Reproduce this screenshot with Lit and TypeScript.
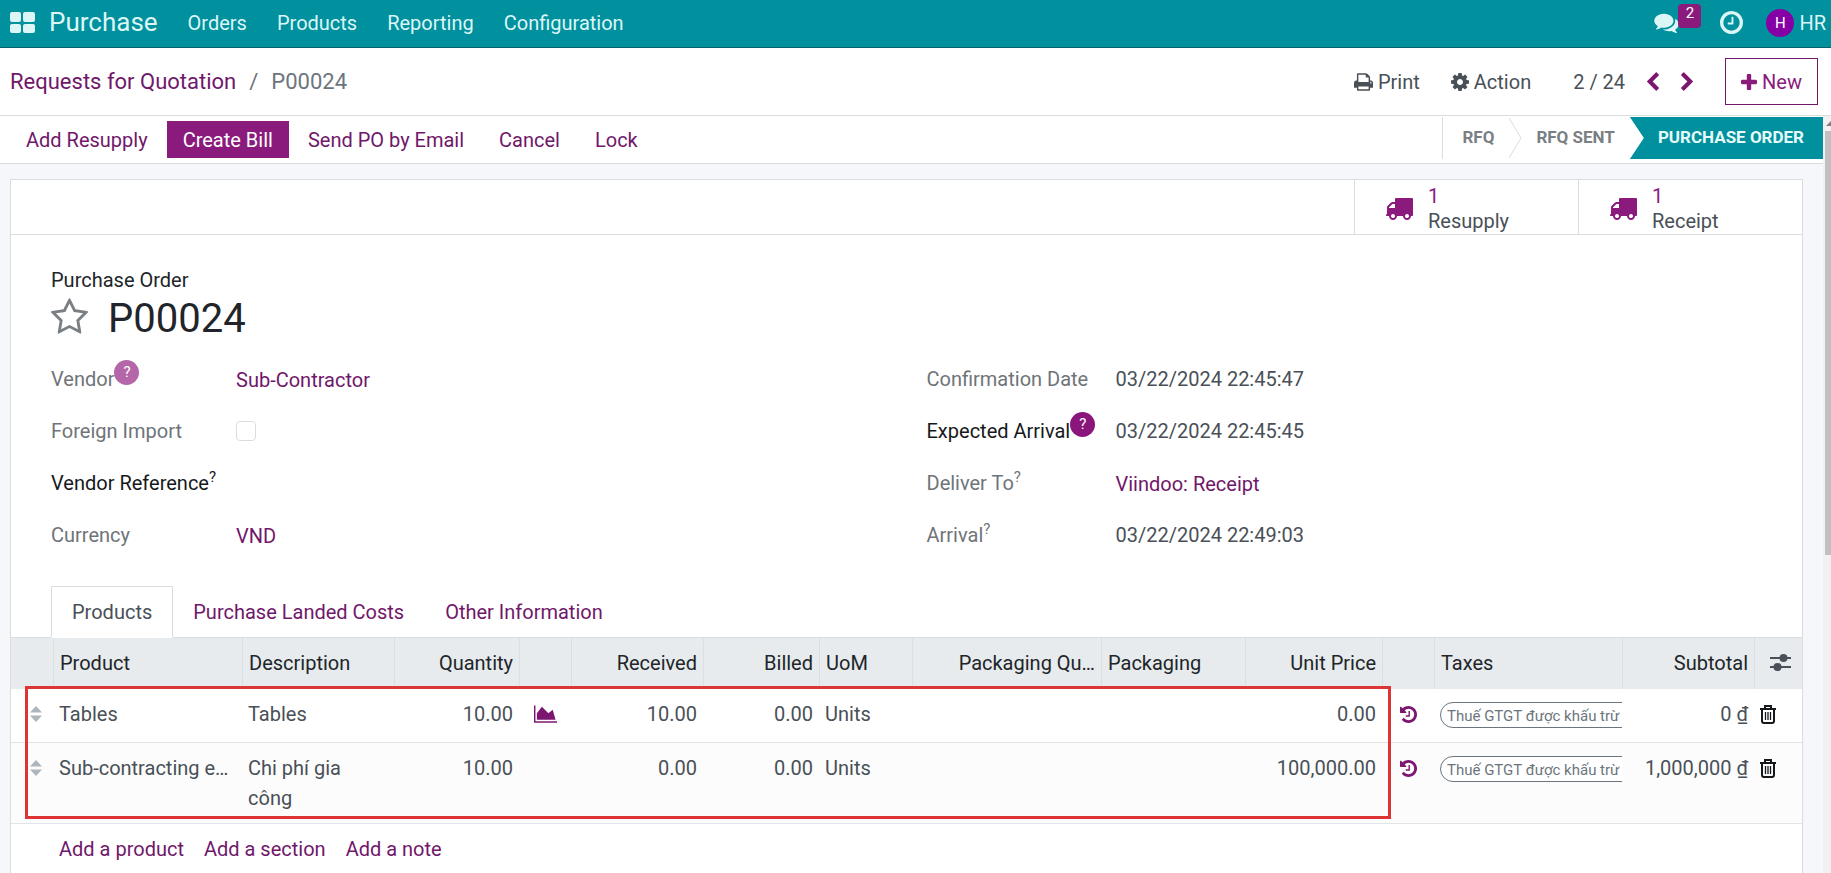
import { LitElement, html, css, svg, nothing } from "lit";
import { customElement, property } from "lit/decorators.js";
import { classMap } from "lit/directives/class-map.js";

const ICONS: Record<string, { box: string; d: string }> = {
  comments: {
    box: "0 128 1792 1536",
    d: "M1408 768q0 139-94 257t-256.5 186.5-353.5 68.5q-86 0-176-16-124 88-278 128-36 9-86 16h-3q-11 0-20.5-8t-11.5-21q-1-3-1-6.5t.5-6.5 2-6l2.5-5 3.5-5.5 4-5 4.5-5 4-4.5q5-6 23-25t26-29.5 22.5-29 25-38.5 20.5-44q-124-72-195-177t-71-224q0-139 94-257t256.5-186.5 353.5-68.5 353.5 68.5 256.5 186.5 94 257zm384 256q0 120-71 224.5t-195 176.5q10 24 20.5 44t25 38.5 22.5 29 26 29.5 23 25q1 1 4 4.5t4.5 5 4 5 3.5 5.5l2.5 5 2 6 .5 6.5-1 6.5q-3 14-13 22t-22 7q-50-7-86-16-154-40-278-128-90 16-176 16-271 0-472-132 58 4 88 4 161 0 309-45t264-129q125-92 192-212t67-254q0-77-23-152 129 71 204 178t75 230z",
  },
  clock: {
    box: "128 128 1536 1536",
    d: "M1024 544v448q0 14-9 23t-23 9h-320q-14 0-23-9t-9-23v-64q0-14 9-23t23-9h224v-352q0-14 9-23t23-9h64q14 0 23 9t9 23zm416 352q0-148-73-273t-198-198-273-73-273 73-198 198-73 273 73 273 198 198 273 73 273-73 198-198 73-273zm224 0q0 209-103 385.5t-279.5 279.5-385.5 103-385.5-103-279.5-279.5-103-385.5 103-385.5 279.5-279.5 385.5-103 385.5 103 279.5 279.5 103 385.5z",
  },
  print: {
    box: "64 128 1664 1536",
    d: "M448 1536h896v-256h-896v256zm0-640h896v-384h-160q-40 0-68-28t-28-68v-160h-640v640zm1152 64q0-26-19-45t-45-19-45 19-19 45 19 45 45 19 45-19 19-45zm128 0v416q0 13-9.5 22.5t-22.5 9.5h-224v160q0 40-28 68t-68 28h-960q-40 0-68-28t-28-68v-160h-224q-13 0-22.5-9.5t-9.5-22.5v-416q0-79 56.5-135.5t135.5-56.5h64v-544q0-40 28-68t68-28h672q40 0 88 20t76 48l152 152q28 28 48 76t20 88v256h64q79 0 135.5 56.5t56.5 135.5z",
  },
  cog: {
    box: "128 128 1536 1536",
    d: "M1152 896q0-106-75-181t-181-75-181 75-75 181 75 181 181 75 181-75 75-181zm512-109v222q0 12-8 23t-20 13l-185 28q-19 54-39 91 35 50 107 138 10 12 10 25t-9 23q-27 37-99 108t-94 71q-12 0-26-9l-138-108q-44 23-91 38-16 136-29 186-7 28-36 28h-222q-14 0-24.5-8.5t-11.5-21.5l-28-184q-49-16-90-37l-141 107q-10 9-25 9-14 0-25-11-126-114-165-168-7-10-7-23 0-12 8-23 15-21 51-66.5t54-70.5q-27-50-41-99l-183-27q-13-2-21-12.5t-8-23.5v-222q0-12 8-23t19-13l186-28q14-46 39-92-40-57-107-138-10-12-10-24 0-10 9-23 26-36 98.5-107.5t94.5-71.5q13 0 26 10l138 107q44-23 91-38 16-136 29-186 7-28 36-28h222q14 0 24.5 8.5t11.5 21.5l28 184q49 16 90 37l142-107q9-9 24-9 13 0 25 10 129 119 165 170 7 8 7 22 0 12-8 23-15 21-51 66.5t-54 70.5q26 50 41 98l183 28q13 2 21 12.5t8 23.5z",
  },
  left: {
    box: "410 0 1036 1664",
    d: "M1427 301l-531 531 531 531q19 19 19 45t-19 45l-166 166q-19 19-45 19t-45-19l-742-742q-19-19-19-45t19-45l742-742q19-19 45-19t45 19l166 166q19 19 19 45t-19 45z",
  },
  plus: {
    box: "192 128 1408 1408",
    d: "M1600 736v192q0 40-28 68t-68 28h-416v416q0 40-28 68t-68 28h-192q-40 0-68-28t-28-68v-416h-416q-40 0-68-28t-28-68v-192q0-40 28-68t68-28h416v-416q0-40 28-68t68-28h192q40 0 68 28t28 68v416h416q40 0 68 28t28 68z",
  },
  truck: {
    box: "64 256 1728 1408",
    d: "M640 1408q0-52-38-90t-90-38-90 38-38 90 38 90 90 38 90-38 38-90zm-384-512h384v-256h-158q-13 0-22 9l-195 195q-9 9-9 22v30zm1280 512q0-52-38-90t-90-38-90 38-38 90 38 90 90 38 90-38 38-90zm256-1088v1024q0 15-4 26.5t-13.5 18.5-16.5 11.5-23.5 6-22.5 2-25.5 0-22.5-.5q0 106-75 181t-181 75-181-75-75-181h-384q0 106-75 181t-181 75-181-75-75-181h-64q-3 0-22.5.5t-25.5 0-22.5-2-23.5-6-16.5-11.5-13.5-18.5-4-26.5q0-26 19-45t45-19v-320q0-8-.5-35t0-38 2.5-34.5 6.5-37 14-30.5 22.5-30l198-198q19-19 50.5-32t58.5-13h160v-192q0-26 19-45t45-19h1024q26 0 45 19t19 45z",
  },
  star: {
    box: "64 32 1664 1588",
    d: "M1201 1004l306-297-422-62-189-382-189 382-422 62 306 297-73 421 378-199 377 199zm527-357q0 22-26 48l-363 354 86 500q1 7 1 20 0 50-41 50-19 0-40-12l-449-236-449 236q-22 12-40 12-21 0-31.5-14.5t-10.5-35.5q0-6 2-20l86-500-364-354q-25-27-25-48 0-37 56-46l502-73 225-455q19-41 49-41t49 41l225 455 502 73q56 9 56 46z",
  },
  chart: {
    box: "0 128 2048 1536",
    d: "M2048 1536v128h-2048v-1536h128v1408h1920zm-384-1024l256 896h-1664v-576l448-576 576 576z",
  },
  history: {
    box: "128 128 1536 1536",
    d: "M1664 896q0 156-61 298t-164 245-245 164-298 61q-172 0-327-72.5t-264-204.5q-7-10-6.5-22.5t8.5-20.5l137-138q10-9 25-9 16 2 23 12 73 95 179 147t225 52q104 0 198.5-40.5t163.5-109.5 109.5-163.5 40.5-198.5-40.5-198.5-109.5-163.5-163.5-109.5-198.5-40.5q-98 0-188 35.5t-160 101.5l137 138q31 30 14 69-17 40-59 40h-448q-26 0-45-19t-19-45v-448q0-42 40-59 39-17 69 14l130 129q107-101 244.5-156.5t284.5-55.5q156 0 298 61t245 164 164 245 61 298zm-640-288v448q0 14-9 23t-23 9h-320q-14 0-23-9t-9-23v-64q0-14 9-23t23-9h224v-352q0-14 9-23t23-9h64q14 0 23 9t9 23z",
  },
};

const icon = (name: string, w: number, h: number) => html`<svg
  class="icon"
  width=${w}
  height=${h}
  viewBox=${ICONS[name].box}
  fill="currentColor"
  aria-hidden="true"
>
  ${svg`<path d=${ICONS[name].d}></path>`}
</svg>`;

const base = css`
  * {
    box-sizing: border-box;
  }
  button {
    font: inherit;
    color: inherit;
    background: none;
    border: 0;
    margin: 0;
    padding: 0;
    cursor: pointer;
    white-space: nowrap;
  }
  a {
    color: inherit;
    text-decoration: none;
  }
  .icon {
    display: block;
    flex: none;
  }
`;

@customElement("top-bar")
class TopBar extends LitElement {
  static styles = [
    base,
    css`
      :host {
        display: block;
      }
      .bar {
        display: flex;
        align-items: center;
        height: 48px;
        padding: 0 5px 2px 10px;
        background: #00909e;
        border-bottom: 1px solid #07606b;
        color: #dcf6f6;
      }
      .brand {
        font-size: 26px;
        margin: 0 15px 0 14px;
      }
      .menu {
        display: flex;
      }
      .menu a {
        padding: 0 15px;
      }
      .tray {
        display: flex;
        align-items: center;
        margin-left: auto;
      }
      .messages {
        position: relative;
        padding: 0 41px 0 0;
      }
      .badge {
        position: absolute;
        left: 24px;
        top: -8px;
        width: 23px;
        height: 24px;
        border-radius: 4px;
        background: #8a1a7c;
        color: #fff;
        font-size: 15px;
        line-height: 19px;
        text-align: center;
      }
      .user {
        display: flex;
        align-items: center;
        gap: 5px;
        margin-left: 23px;
      }
      .avatar {
        width: 28px;
        height: 28px;
        border-radius: 50%;
        background: #8500a5;
        color: #fff;
        font-size: 15px;
        line-height: 28px;
        text-align: center;
      }
    `,
  ];

  render() {
    return html`<header class="bar">
      <button aria-label="Apps">
        <svg class="icon" width="25" height="21" viewBox="0 0 25 21" fill="currentColor">
          <rect width="11" height="10" rx="2"></rect>
          <rect x="13" width="12" height="10" rx="2"></rect>
          <rect y="12" width="11" height="9" rx="2"></rect>
          <rect x="13" y="12" width="12" height="9" rx="2"></rect>
        </svg>
      </button>
      <a class="brand" href="#">Purchase</a>
      <nav class="menu">
        ${["Orders", "Products", "Reporting", "Configuration"].map((m) => html`<a href="#">${m}</a>`)}
      </nav>
      <div class="tray">
        <button class="messages" aria-label="Messages">${icon("comments", 25, 21)}<span class="badge">2</span></button>
        <button aria-label="Activities">${icon("clock", 23, 23)}</button>
        <button class="user"><span class="avatar">H</span>HR</button>
      </div>
    </header>`;
  }
}

@customElement("control-panel")
class ControlPanel extends LitElement {
  static styles = [
    base,
    css`
      :host {
        display: block;
      }
      .panel {
        display: flex;
        align-items: center;
        height: 68px;
        padding: 0 13px 0 10px;
        border-bottom: 1px solid #dadde0;
        background: #fff;
        color: #495057;
      }
      .crumbs {
        display: flex;
        gap: 13px;
        font-size: 22px;
        color: #6c757d;
      }
      .crumbs a {
        color: #71176a;
      }
      .right {
        display: flex;
        align-items: center;
        margin-left: auto;
      }
      .tool {
        display: flex;
        align-items: center;
        gap: 5px;
        margin-right: 31px;
      }
      .pager {
        display: flex;
        align-items: center;
        gap: 22px;
        margin: 0 32px 0 11px;
      }
      .pager button {
        color: #7c1670;
      }
      .flip {
        transform: scaleX(-1);
      }
      .new {
        display: flex;
        align-items: center;
        gap: 5px;
        height: 47px;
        padding: 0 15px;
        border: 1px solid #71176a;
        color: #8a1a7c;
      }
    `,
  ];

  render() {
    return html`<div class="panel">
      <nav class="crumbs" aria-label="Breadcrumb">
        <a href="#">Requests for Quotation</a><span>/</span><span>P00024</span>
      </nav>
      <div class="right">
        <button class="tool">${icon("print", 19, 18)}Print</button>
        <button class="tool">${icon("cog", 18, 18)}Action</button>
        <div class="pager">
          <span>2 / 24</span>
          <button aria-label="Previous">${icon("left", 12, 19)}</button>
          <button class="flip" aria-label="Next">${icon("left", 12, 19)}</button>
        </div>
        <button class="new">${icon("plus", 16, 16)}New</button>
      </div>
    </div>`;
  }
}

@customElement("status-bar")
class StatusBar extends LitElement {
  static styles = [
    base,
    css`
      :host {
        display: block;
      }
      .bar {
        display: flex;
        align-items: center;
        justify-content: space-between;
        height: 48px;
        padding-left: 10px;
        background: #fff;
        border-bottom: 1px solid #dadde0;
      }
      .actions {
        display: flex;
        gap: 3px;
      }
      .actions button {
        height: 37px;
        padding: 0 16px;
        color: #71176a;
      }
      .actions .primary {
        background: #8a1a7c;
        color: #fff;
      }
      .stages {
        display: flex;
        align-items: center;
        align-self: flex-start;
        height: 42px;
        margin: 1px 0 0;
        padding: 0;
        list-style: none;
        border-left: 1px solid #dadde0;
        font-size: 17px;
        font-weight: 700;
        line-height: 41px;
        color: #7a7f84;
      }
      .stages li {
        height: 42px;
        padding: 0 15px 0 19px;
        white-space: nowrap;
      }
      .stages .second {
        padding: 0 15px 0 14px;
      }
      .stages .current {
        padding: 0 19px 0 28px;
        background: #00909e;
        color: #e6fbfb;
        clip-path: polygon(0 0, 100% 0, 100% 100%, 0 100%, 14px 50%);
      }
    `,
  ];

  render() {
    return html`<div class="bar">
      <div class="actions">
        <button>Add Resupply</button>
        <button class="primary">Create Bill</button>
        <button>Send PO by Email</button>
        <button>Cancel</button>
        <button>Lock</button>
      </div>
      <ol class="stages">
        <li>RFQ</li>
        <svg class="icon" width="13" height="42" viewBox="0 0 13 42" fill="none" stroke="#dadde0">
          <path d="M0 1l12 20L0 41"></path>
        </svg>
        <li class="second">RFQ SENT</li>
        <li class="current" aria-current="step">PURCHASE ORDER</li>
      </ol>
    </div>`;
  }
}

interface Field {
  label: string;
  value?: string;
  kind?: "link" | "check" | "text";
  help?: "mark" | "soft" | "strong";
  dark?: boolean;
}

@customElement("field-group")
class FieldGroup extends LitElement {
  @property({ attribute: false }) fields: Field[] = [];

  static styles = [
    base,
    css`
      :host {
        display: block;
      }
      .fields {
        display: grid;
        grid-template-columns: var(--label-width) 1fr;
        grid-auto-rows: 52px;
        align-items: start;
        line-height: 30px;
      }
      .label {
        display: flex;
        color: #6f7479;
        white-space: nowrap;
      }
      .dark {
        color: #16191c;
      }
      .value {
        color: #495057;
      }
      .link {
        display: inline-block;
        padding-top: 1px;
        color: #71176a;
      }
      .mark {
        font-size: 15px;
        line-height: 18px;
      }
      .bubble {
        width: 25px;
        height: 25px;
        margin-top: -4px;
        border-radius: 50%;
        background: #8a167b;
        color: #fff;
        font-size: 15px;
        line-height: 25px;
        text-align: center;
      }
      .soft {
        background: #b466a9;
      }
      .check {
        appearance: none;
        display: block;
        width: 20px;
        height: 20px;
        margin: 5px 0 0;
        border: 1px solid #dadde0;
        border-radius: 4px;
        background: #fff;
      }
    `,
  ];

  private help(f: Field) {
    if (!f.help) return nothing;
    if (f.help === "mark") return html`<span class="mark">?</span>`;
    return html`<span class=${classMap({ bubble: true, soft: f.help === "soft" })}>?</span>`;
  }

  render() {
    return html`<div class="fields">
      ${this.fields.map((f, i) => {
        const cls = classMap({ label: true, dark: !!f.dark });
        return f.kind === "check"
          ? html`<label class=${cls} for="f${i}">${f.label}</label><input class="check" type="checkbox" id="f${i}" />`
          : html`<span class=${cls}>${f.label}${this.help(f)}</span>
              <span class="value">${f.kind === "link" ? html`<a class="link" href="#">${f.value}</a>` : f.value}</span>`;
      })}
    </div>`;
  }
}

const COLUMNS: { title: string; width: number; right?: boolean }[] = [
  { title: "", width: 42 },
  { title: "Product", width: 189 },
  { title: "Description", width: 152 },
  { title: "Quantity", width: 125, right: true },
  { title: "", width: 52 },
  { title: "Received", width: 132, right: true },
  { title: "Billed", width: 116, right: true },
  { title: "UoM", width: 93 },
  { title: "Packaging Qu…", width: 189, right: true },
  { title: "Packaging", width: 144 },
  { title: "Unit Price", width: 137, right: true },
  { title: "", width: 52 },
  { title: "Taxes", width: 188 },
  { title: "Subtotal", width: 132, right: true },
  { title: "", width: 48 },
];

const LINES = [
  { product: "Tables", text: "Tables", qty: "10.00", forecast: true, received: "10.00", billed: "0.00", uom: "Units", price: "0.00", tax: "Thuế GTGT được khấu trừ", subtotal: "0 ₫" },
  { product: "Sub-contracting e…", text: "Chi phí gia công", qty: "10.00", forecast: false, received: "0.00", billed: "0.00", uom: "Units", price: "100,000.00", tax: "Thuế GTGT được khấu trừ", subtotal: "1,000,000 ₫" },
];

@customElement("order-lines")
class OrderLines extends LitElement {
  static styles = [
    base,
    css`
      :host {
        display: block;
        position: relative;
      }
      table {
        width: 100%;
        table-layout: fixed;
        border-collapse: separate;
        border-spacing: 0;
        color: #495057;
        line-height: 30px;
      }
      th {
        height: 51px;
        padding: 0 6px 2px;
        background: #e7ebed;
        border-left: 1px solid #dadfe3;
        color: #212529;
        font-weight: 400;
        text-align: left;
        white-space: nowrap;
      }
      th:first-child {
        border-left: 0;
      }
      td {
        padding: 10px 6px 13px;
        border-bottom: 1px solid #e2e5e8;
        vertical-align: top;
        overflow: hidden;
      }
      tbody tr:nth-child(2) td {
        background: #fcfcfc;
        padding-bottom: 10px;
      }
      tbody tr:last-child td {
        border-bottom: 0;
      }
      .right {
        text-align: right;
      }
      .nowrap {
        white-space: nowrap;
      }
      td button {
        display: flex;
        align-items: center;
        height: 30px;
      }
      .handle {
        margin-left: 13px;
        color: #adb5bd;
      }
      .violet {
        margin: 0 auto;
        color: #7c1670;
      }
      .bin {
        color: #16191c;
      }
      .taxes {
        padding-right: 0;
      }
      .tag {
        display: block;
        width: 200px;
        height: 26px;
        margin-top: 3px;
        padding-left: 6px;
        border: 1px solid #6c757d;
        border-radius: 13px;
        color: #6c757d;
        font-size: 15px;
        line-height: 26px;
        white-space: nowrap;
        background: #fff;
      }
      .options {
        display: block;
        margin-left: 9px;
      }
      .adders {
        display: flex;
        gap: 20px;
        color: #71176a;
      }
      .highlight {
        position: absolute;
        top: 48px;
        left: 14px;
        right: 411px;
        height: 133px;
        border: 3px solid #dd3534;
        pointer-events: none;
      }
    `,
  ];

  render() {
    return html`<table>
        <colgroup>
          ${COLUMNS.map((c) => html`<col width=${c.width} />`)}
        </colgroup>
        <thead>
          <tr>
            ${COLUMNS.map((c, i) =>
              i === COLUMNS.length - 1
                ? html`<th>
                    <button class="options" aria-label="Optional columns">
                      <svg class="icon" width="21" height="19" viewBox="0 0 21 19" fill="#495057">
                        <path d="M0 4h21v2H0zM0 13h21v2H0z"></path>
                        <circle cx="13.500" cy="5" r="4"></circle>
                        <circle cx="7.500" cy="14" r="4"></circle>
                      </svg>
                    </button>
                  </th>`
                : html`<th class=${classMap({ right: !!c.right })}>${c.title}</th>`
            )}
          </tr>
        </thead>
        <tbody>
          ${LINES.map(
            (l) => html`<tr>
              <td>
                <button class="handle" aria-label="Move line">
                  <svg class="icon" width="12" height="16" viewBox="0 0 12 16" fill="currentColor">
                    <path d="M6 0l6 6.500H0zM6 16l6-6.500H0z"></path>
                  </svg>
                </button>
              </td>
              <td class="nowrap">${l.product}</td>
              <td>${l.text}</td>
              <td class="right">${l.qty}</td>
              <td>
                ${l.forecast
                  ? html`<button class="violet" aria-label="Forecast">${icon("chart", 23, 18)}</button>`
                  : nothing}
              </td>
              <td class="right">${l.received}</td>
              <td class="right">${l.billed}</td>
              <td>${l.uom}</td>
              <td></td>
              <td></td>
              <td class="right">${l.price}</td>
              <td><button class="violet" aria-label="Price history">${icon("history", 17, 17)}</button></td>
              <td class="taxes"><span class="tag">${l.tax}</span></td>
              <td class="right nowrap">${l.subtotal}</td>
              <td>
                <button class="bin" aria-label="Delete line">
                  <svg class="icon" width="16" height="19" viewBox="0 0 16 19" fill="none" stroke="currentColor" stroke-width="2">
                    <path d="M0 4h16M5 4V1h6v3M2 4v12q0 2 2 2h8q2 0 2-2V4"></path>
                    <path d="M5.500 7v8M8 7v8M10.500 7v8" stroke-width="1.300"></path>
                  </svg>
                </button>
              </td>
            </tr>`
          )}
          <tr>
            <td></td>
            <td colspan="14">
              <div class="adders">
                <a href="#">Add a product</a><a href="#">Add a section</a><a href="#">Add a note</a>
              </div>
            </td>
          </tr>
        </tbody>
      </table>
      <div class="highlight"></div>`;
  }
}

@customElement("app-root")
class AppRoot extends LitElement {
  private left: Field[] = [
    { label: "Vendor", value: "Sub-Contractor", kind: "link", help: "soft" },
    { label: "Foreign Import", kind: "check" },
    { label: "Vendor Reference", value: "", help: "mark", dark: true },
    { label: "Currency", value: "VND", kind: "link" },
  ];

  private right: Field[] = [
    { label: "Confirmation Date", value: "03/22/2024 22:45:47" },
    { label: "Expected Arrival", value: "03/22/2024 22:45:45", help: "strong", dark: true },
    { label: "Deliver To", value: "Viindoo: Receipt", kind: "link", help: "mark" },
    { label: "Arrival", value: "03/22/2024 22:49:03", help: "mark" },
  ];

  static styles = [
    base,
    css`
      :host {
        display: flex;
        flex-direction: column;
        height: 100vh;
        overflow: hidden;
        background: #fff;
        font: 20px/1.5 Roboto, "Noto Sans", sans-serif;
      }
      .body {
        display: flex;
        flex: 1;
        min-height: 0;
      }
      .content {
        flex: 1;
        min-width: 0;
        overflow: hidden;
        background: #f6f7fa;
      }
      .scroll {
        display: flex;
        flex-direction: column;
        width: 8px;
        padding-left: 2px;
        background: #f1f1f1;
      }
      .thumb {
        height: 56%;
        background: #c1c1c1;
      }
      .sheet {
        min-height: 100%;
        margin: 15px 20px 0 10px;
        background: #fff;
        border: 1px solid #dadde0;
      }
      .stats {
        display: flex;
        justify-content: flex-end;
        height: 55px;
        border-bottom: 1px solid #dadde0;
      }
      .stat {
        display: flex;
        align-items: center;
        gap: 15px;
        width: 224px;
        padding: 4px 0 0 31px;
        border-left: 1px solid #dadde0;
        color: #495057;
        line-height: 25px;
        text-align: left;
      }
      .stat .icon,
      .count {
        color: #8a1a7c;
      }
      .count {
        display: block;
      }
      .head {
        padding: 30px 40px 0;
        color: #212529;
      }
      .title {
        display: flex;
        align-items: flex-start;
        gap: 20px;
        height: 48px;
      }
      .title button {
        padding-top: 3px;
        color: #7a7f84;
      }
      h1 {
        margin: 0;
        font-size: 40px;
        font-weight: 400;
        line-height: 48px;
      }
      .groups {
        display: grid;
        grid-template-columns: 1fr 1fr;
        gap: 40px;
        padding: 21px 40px 0;
      }
      .first {
        --label-width: 185px;
      }
      .second {
        --label-width: 189px;
      }
      .tabs {
        display: flex;
        height: 52px;
        margin-top: 14px;
        padding-left: 40px;
        border-bottom: 1px solid #dadde0;
        color: #71176a;
      }
      .tabs button {
        padding: 0 20px;
        border: 1px solid transparent;
        border-left: 0;
      }
      .tabs .active {
        margin-bottom: -1px;
        background: #fff;
        border-left: 1px solid;
        border-color: #dadde0 #dadde0 #fff;
        color: #495057;
      }
    `,
  ];

  render() {
    return html`<top-bar></top-bar>
      <control-panel></control-panel>
      <div class="body">
        <div class="content">
          <status-bar></status-bar>
          <main class="sheet">
            <div class="stats">
              <button class="stat">${icon("truck", 27, 22)}<span><span class="count">1</span>Resupply</span></button>
              <button class="stat">${icon("truck", 27, 22)}<span><span class="count">1</span>Receipt</span></button>
            </div>
            <div class="head">
              <div>Purchase Order</div>
              <div class="title">
                <button aria-label="Priority">${icon("star", 37, 36)}</button>
                <h1>P00024</h1>
              </div>
            </div>
            <div class="groups">
              <field-group class="first" .fields=${this.left}></field-group>
              <field-group class="second" .fields=${this.right}></field-group>
            </div>
            <div class="tabs" role="tablist">
              <button class="active" role="tab" aria-selected="true">Products</button>
              <button role="tab">Purchase Landed Costs</button>
              <button role="tab">Other Information</button>
            </div>
            <order-lines></order-lines>
          </main>
        </div>
        <div class="scroll" aria-hidden="true">
          <svg class="icon" width="6" height="15" viewBox="0 0 6 15" fill="#7f7f7f"><path d="M1 10l5-5v5z"></path></svg>
          <div class="thumb"></div>
        </div>
      </div>`;
  }
}
